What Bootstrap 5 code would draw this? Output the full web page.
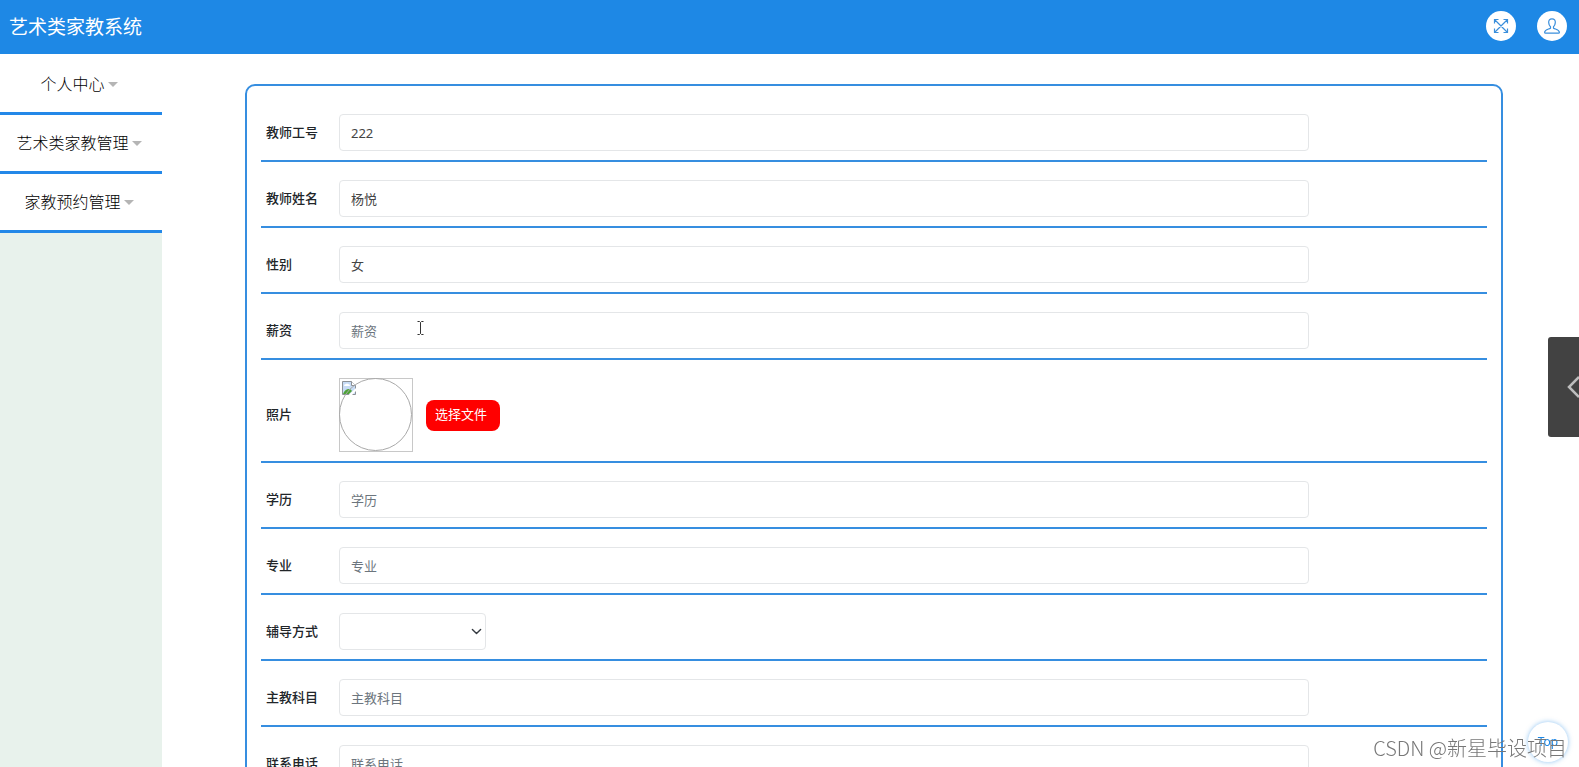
<!DOCTYPE html>
<html lang="zh-CN">
<head>
<meta charset="utf-8">
<meta name="viewport" content="width=device-width, initial-scale=1">
<title>艺术类家教系统</title>
<link href="https://cdn.jsdelivr.net/npm/bootstrap@5.3.0/dist/css/bootstrap.min.css" rel="stylesheet">
<style>
:root { --brand: #1e88e5; --rule: #368ee0; }
body { font-family: "Noto Sans", "Noto Sans CJK SC", sans-serif; font-size: 13px; color: #212529; background: #fff; }
.topbar { height: 54px; background: var(--brand); padding: 0 12px 2px 9px; }
.topbar .brand-name { font-size: 19px; color: #fff; font-family: "Noto Sans CJK SC", sans-serif; }
.round-btn { width: 30px; height: 30px; color: #3a8fdc; }
.round-gap { gap: 21px; }
.sidebar { width: 162px; background: #e8f2ec; }
.side-top { padding-top: 2px; }
.side-link { height: 59px; font-size: 16px; font-weight: 300; color: #000; border-bottom: 3px solid #2388e8; gap: 3px; padding-right: 4px; }
.side-link .tri { border: 5px solid transparent; border-top-color: #b5b5b5; border-bottom: 0; }
.content { padding: 30px 76px 0 83px; }
.form-panel { border: 2px solid var(--rule); border-radius: 10px; padding: 10px 14px; }
.form-line { border-bottom: 2px solid var(--rule); padding: 18px 0 9px 5px; }
.form-line > .line-label { width: 73px; font-weight: 500; }
.form-line .form-control, .form-line .form-select { height: 37px; font-size: 13px; border-color: #e4e6e8; border-radius: 4px; padding: 0 11px; color: #444; }
.form-line .form-control { width: 84.5%; }
.form-line .form-control::placeholder { color: #6c757d; }
.form-line .form-select { width: 147px; background-size: 11px 11px; background-position: right 3px center; }
.photo { width: 74px; height: 74px; }
.pick-btn { background: #f00; color: #fff; font-size: 13px; width: 74px; height: 31px; border-radius: 8px; margin-left: 13px; padding: 0 4px 0 0; border: 0; }
.pick-btn:hover { background: #d00; color: #fff; }
.drawer-tab { right: 0; top: 337px; width: 31px; height: 100px; background: #424242; border-radius: 3px 0 0 3px; }
.to-top { right: 11px; bottom: 5px; width: 40px; height: 40px; color: var(--brand); font-size: 12px; background: #fff; box-shadow: 0 0 5px rgba(30,136,229,.5); }
.mark-text { right: 12px; bottom: 4px; font-size: 20px; line-height: 30px; color: #777; font-family: "Noto Sans CJK SC", sans-serif; font-weight: 300; }
.caret-ibeam { left: 78px; top: 9px; }
</style>
</head>
<body class="vh-100 overflow-hidden d-flex flex-column">
<header class="topbar d-flex align-items-center justify-content-between flex-shrink-0">
  <span class="brand-name">艺术类家教系统</span>
  <div class="d-flex round-gap">
    <button type="button" class="round-btn btn btn-light bg-white rounded-circle p-0 border-0 d-flex align-items-center justify-content-center" aria-label="全屏">
      <svg width="16" height="16" viewBox="0 0 16 16" fill="none" stroke="currentColor" stroke-width="1.2"><path d="M1.5 1.5l13 13M14.500 1.500l-13 13M1.500 5.500v-4h4M10.500 1.500h4v4M14.500 10.500v4h-4M5.500 14.500h-4v-4"/></svg>
    </button>
    <button type="button" class="round-btn btn btn-light bg-white rounded-circle p-0 border-0 d-flex align-items-center justify-content-center" aria-label="用户">
      <svg width="16" height="16" viewBox="0 0 16 16" fill="none" stroke="currentColor" stroke-width="1.200" stroke-linejoin="round"><path d="M8 .8C5.600.8 4.500 2.400 4.700 4.600c.1 1.800.8 3.200 1.800 4.100v1.500C4.500 11.300.7 11.600.6 14.300c0 .5.300.9.900.9h13c.6 0 .9-.4.900-.9-.1-2.700-3.900-3-5.900-4.100V8.700c1-.9 1.700-2.300 1.800-4.100C11.500 2.400 10.400.8 8 .8z"/></svg>
    </button>
  </div>
</header>
<div class="d-flex flex-grow-1 overflow-hidden">
  <nav class="sidebar flex-shrink-0">
    <div class="side-top bg-white">
      <a href="#" class="side-link bg-white d-flex align-items-center justify-content-center text-decoration-none">个人中心<span class="tri"></span></a>
      <a href="#" class="side-link bg-white d-flex align-items-center justify-content-center text-decoration-none">艺术类家教管理<span class="tri"></span></a>
      <a href="#" class="side-link bg-white d-flex align-items-center justify-content-center text-decoration-none">家教预约管理<span class="tri"></span></a>
    </div>
  </nav>
  <main class="content flex-grow-1 overflow-hidden">
    <form class="form-panel">
      <div class="form-line d-flex align-items-center">
        <label class="line-label flex-shrink-0" for="f1">教师工号</label>
        <div class="flex-grow-1"><input id="f1" type="text" class="form-control" value="222" placeholder="教师工号"></div>
      </div>
      <div class="form-line d-flex align-items-center">
        <label class="line-label flex-shrink-0" for="f2">教师姓名</label>
        <div class="flex-grow-1"><input id="f2" type="text" class="form-control" value="杨悦" placeholder="教师姓名"></div>
      </div>
      <div class="form-line d-flex align-items-center">
        <label class="line-label flex-shrink-0" for="f3">性别</label>
        <div class="flex-grow-1"><input id="f3" type="text" class="form-control" value="女" placeholder="性别"></div>
      </div>
      <div class="form-line d-flex align-items-center">
        <label class="line-label flex-shrink-0" for="f4">薪资</label>
        <div class="flex-grow-1 position-relative"><input id="f4" type="text" class="form-control" placeholder="薪资">
          <svg class="caret-ibeam position-absolute" width="7" height="14" viewBox="0 0 7 14" fill="none" stroke="#333"><path d="M.5 .5h2l1 1 1-1h2M3.500 1.500v11M.5 13.500h2l1-1 1 1h2"/></svg></div>
      </div>
      <div class="form-line d-flex align-items-center">
        <span class="line-label flex-shrink-0">照片</span>
        <svg class="photo" viewBox="0 0 74 74" fill="none" role="img" aria-label="照片">
          <rect x=".5" y=".5" width="73" height="73" stroke="#c8c8c8"/>
          <path d="M3.500 3.500h9l4 4v9h-13z" fill="#c6dbf5" stroke="#8c9196"/>
          <path d="M12.500 3.500v4h4" fill="#fff" stroke="#8c9196"/>
          <path d="M5 8q0-2 2-2 1-1 2 0 2 0 2 2z" fill="#fff"/>
          <path d="M4 16q2-5 6-5 2 0 3 2l-3 3z" fill="#4ea336"/>
          <path d="M9 17.500l8.500-8v3l-5 5z" fill="#fff"/>
          <circle cx="36.500" cy="36.500" r="36" stroke="#a9a9a9"/>
        </svg>
        <button type="button" class="pick-btn btn">选择文件</button>
      </div>
      <div class="form-line d-flex align-items-center">
        <label class="line-label flex-shrink-0" for="f5">学历</label>
        <div class="flex-grow-1"><input id="f5" type="text" class="form-control" placeholder="学历"></div>
      </div>
      <div class="form-line d-flex align-items-center">
        <label class="line-label flex-shrink-0" for="f6">专业</label>
        <div class="flex-grow-1"><input id="f6" type="text" class="form-control" placeholder="专业"></div>
      </div>
      <div class="form-line d-flex align-items-center">
        <label class="line-label flex-shrink-0" for="f7">辅导方式</label>
        <div class="flex-grow-1"><select id="f7" class="form-select"><option value=""></option></select></div>
      </div>
      <div class="form-line d-flex align-items-center">
        <label class="line-label flex-shrink-0" for="f8">主教科目</label>
        <div class="flex-grow-1"><input id="f8" type="text" class="form-control" placeholder="主教科目"></div>
      </div>
      <div class="form-line d-flex align-items-center">
        <label class="line-label flex-shrink-0" for="f9">联系电话</label>
        <div class="flex-grow-1"><input id="f9" type="text" class="form-control" placeholder="联系电话"></div>
      </div>
    </form>
  </main>
</div>
<button type="button" class="drawer-tab position-fixed border-0 p-0 d-flex align-items-center justify-content-end" aria-label="展开">
  <svg width="12" height="22" viewBox="0 0 12 22" fill="none" stroke="#bdbdbd" stroke-width="2.500"><path d="M12 1L2 11l10 10"/></svg>
</button>
<button type="button" class="to-top btn position-fixed rounded-circle border-0 p-0">Top</button>
<div class="mark-text position-fixed">CSDN @新星毕设项目</div>
<script src="https://cdn.jsdelivr.net/npm/bootstrap@5.3.0/dist/js/bootstrap.bundle.min.js"></script>
</body>
</html>
